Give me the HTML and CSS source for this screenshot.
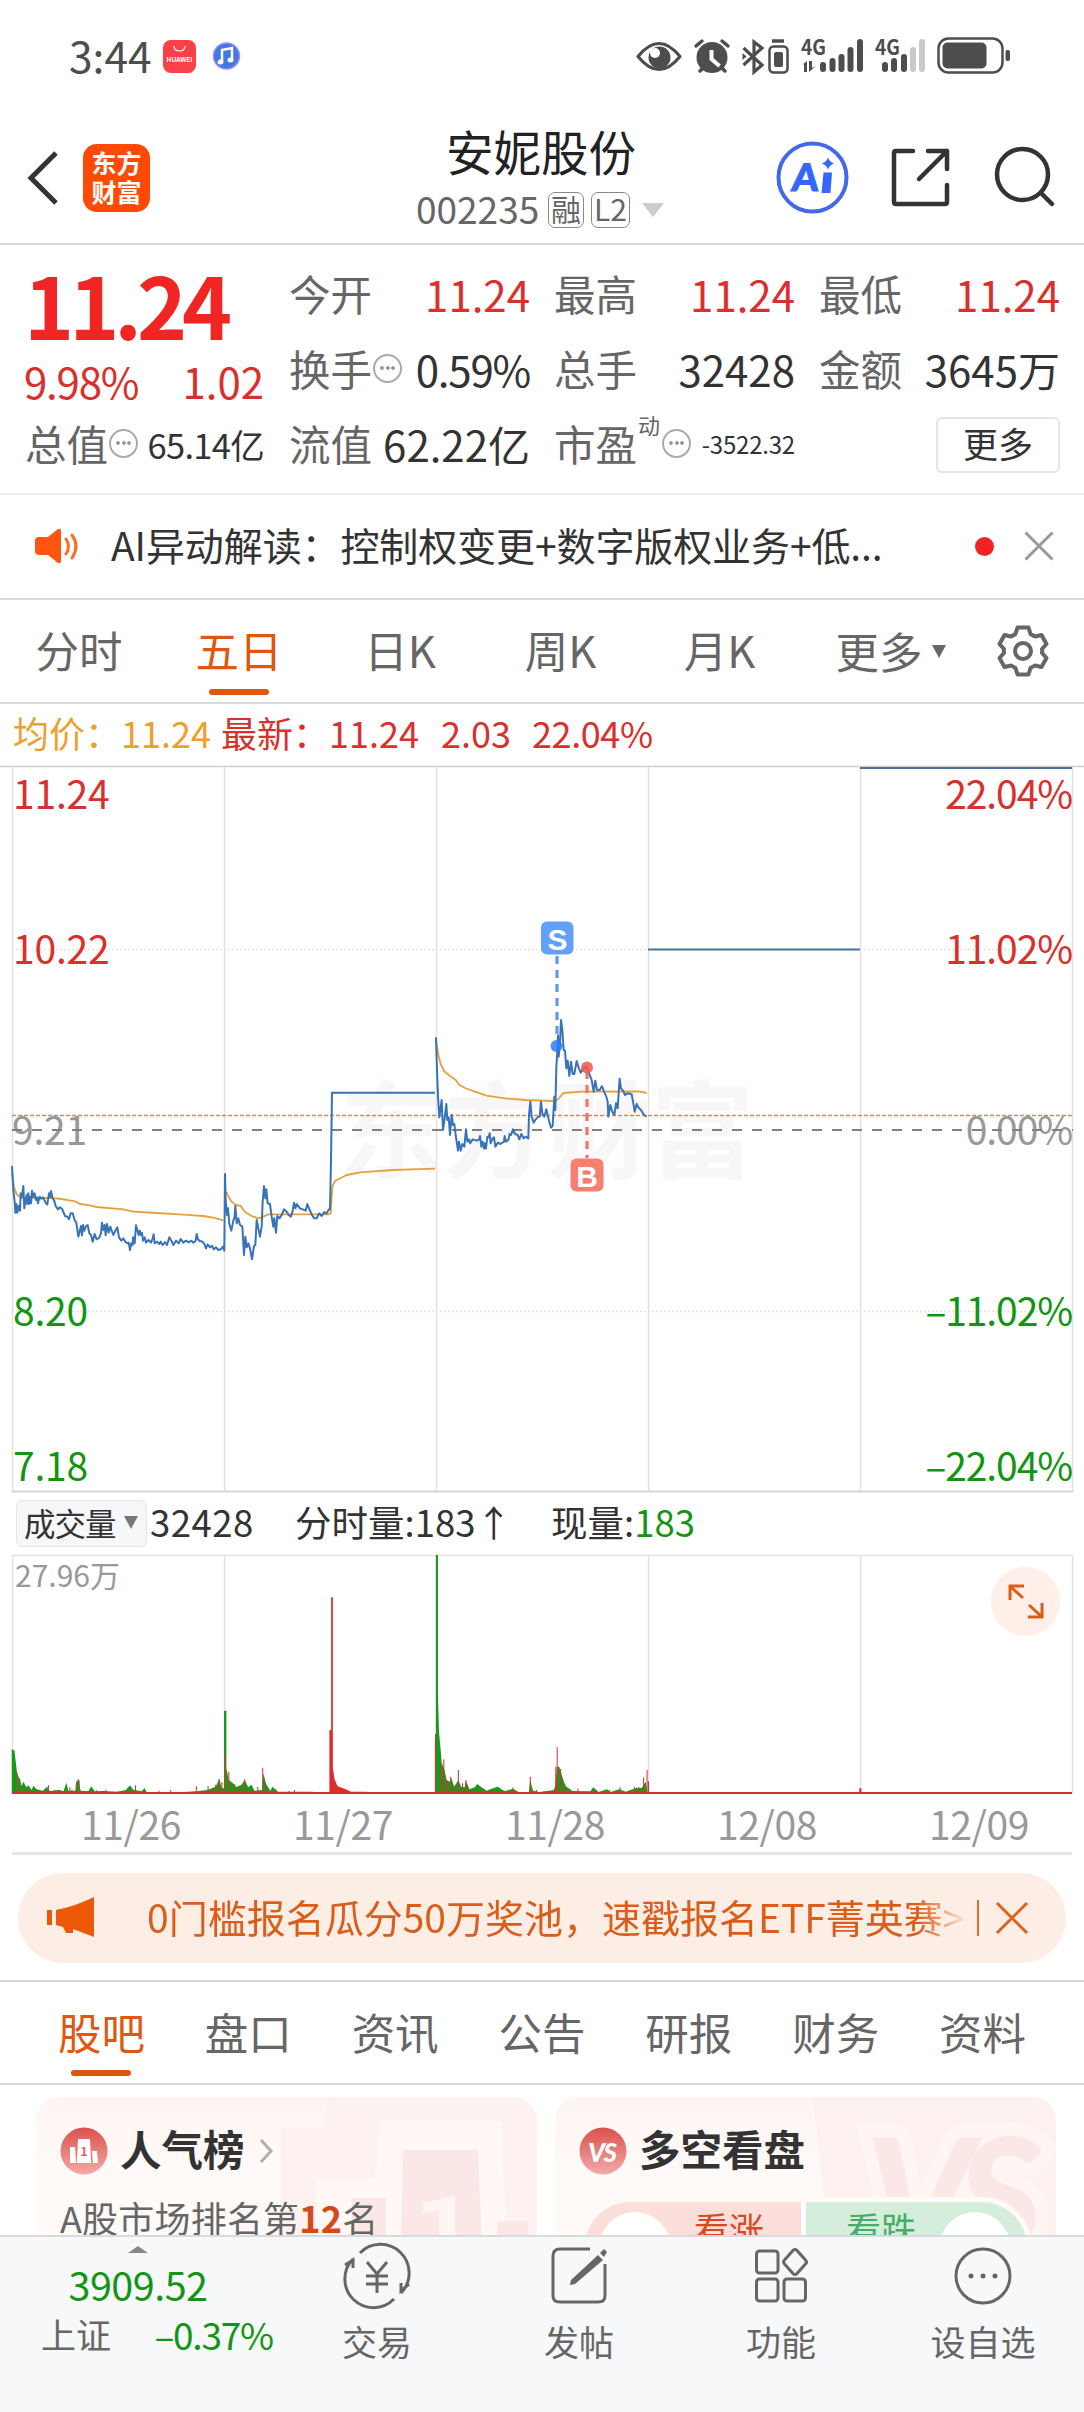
FILE: index.html
```html
<!DOCTYPE html>
<html lang="zh-CN">
<head>
<meta charset="utf-8">
<title>安妮股份 002235</title>
<link rel="stylesheet" href="styles.css">
</head>
<body>
<div class="screen">
<header class="status">
  <span class="clock">3:44</span>
  <svg class="status-apps" width="90" height="36" viewBox="162 38 90 36">
    <rect x="163" y="40" width="33" height="33" rx="8" fill="#fb4048"/>
    <path d="M174 46q0 5 5.500 5t5.500-5" fill="none" stroke="#fff" stroke-width="1.200"/>
    <text x="179.500" y="61.500" font-size="6.500" font-weight="700" fill="#fff" text-anchor="middle">HUAWEI</text>
    <circle cx="226.500" cy="56" r="13" fill="#4377e5" stroke="#9f8df0" stroke-width="1.500"/>
    <path d="M222 62V50l10-2v12" fill="none" stroke="#fff" stroke-width="2.500"/>
    <ellipse cx="220.500" cy="62" rx="3" ry="2.500" fill="#fff"/><ellipse cx="230.500" cy="60" rx="3" ry="2.500" fill="#fff"/>
  </svg>
  <svg class="status-icons" width="376" height="40" viewBox="634 36 376 40">
    <g fill="none" stroke="#4d4d4d" stroke-width="3.200">
      <path d="M638 56.500q21-26 42 0q-21 26-42 0z" stroke-linejoin="round"/>
      <path d="M696 46l6-5M728 46l-6-5M700 71l4-4M725 71l-4-4" stroke-linecap="round" stroke-width="3.500"/>
      <path d="M743.500 48L762 65l-8 7V42l8 6-18.500 17" stroke-width="3.200"/>
      <rect x="769.500" y="46.500" width="18" height="26" rx="4" stroke-width="2.500"/>
      <path d="M772 41h12" stroke-width="3.500"/>
      <rect x="938.500" y="38.500" width="64" height="34" rx="10" stroke-width="2.500"/>
    </g>
    <g fill="#4d4d4d">
      <circle cx="659.500" cy="57.500" r="11"/><circle cx="712" cy="57.500" r="15.500"/>
      <rect x="774" y="52" width="9" height="15" rx="2"/>
      <path d="M742.500 53l4 3.500-4 3.500z"/>
      <rect x="942.500" y="42.500" width="44" height="26" rx="5"/>
      <rect x="1005.500" y="50" width="4.500" height="11" rx="2"/>
      <rect x="820" y="62" width="6" height="10" rx="3"/><rect x="829.500" y="58" width="6" height="14" rx="3"/><rect x="838.500" y="54" width="6" height="18" rx="3"/><rect x="847.500" y="47" width="6" height="25" rx="3"/><rect x="857" y="39" width="6" height="33" rx="3"/>
      <rect x="882" y="62" width="6" height="10" rx="3"/><rect x="891" y="58" width="6" height="14" rx="3"/><rect x="901" y="54" width="6" height="18" rx="3"/>
      <path d="M802 65l5-4v11h-3v-8zM809 61h3v7l4-2-7 6z"/>
      <text x="801" y="54.500" font-size="21" font-weight="700" textLength="25" lengthAdjust="spacingAndGlyphs">4G</text>
      <text x="875" y="54.500" font-size="21" font-weight="700" textLength="25" lengthAdjust="spacingAndGlyphs">4G</text>
    </g>
    <g fill="#c9c9c9"><rect x="910" y="47" width="6" height="25" rx="3"/><rect x="919" y="39" width="6" height="33" rx="3"/></g>
    <circle cx="655" cy="53" r="5" fill="#fff"/>
    <path d="M711.500 50v9l8 7" fill="none" stroke="#fff" stroke-width="4"/>
  </svg>
</header>

<section class="titlebar">
  <svg class="back" width="34" height="56" viewBox="26 149 34 56"><path d="M56 152L31 177l25 25" fill="none" stroke="#333" stroke-width="5"/></svg>
  <div class="brand"><span>东方</span><span>财富</span></div>
  <div class="stock">
    <h1>安妮股份</h1>
    <div class="code"><span>002235</span><b>融</b><b>L2</b><i></i></div>
  </div>
  <svg class="actions" width="284" height="76" viewBox="774 140 284 76">
    <circle cx="812.500" cy="177.500" r="34" fill="none" stroke="#4169e8" stroke-width="4"/>
    <path d="M823.500 172.500h8.500l-1.500 20.500h-9z" fill="#3567ff"/>
    <path d="M828 157.500q1.500 4.500 6 6q-4.500 1.500-6 6q-1.500-4.500-6-6q4.500-1.500 6-6z" fill="#3567ff"/>
    <text transform="translate(791,190.500) skewX(-5)" x="0" y="0" class="ai-letter">A</text>
    <g fill="none" stroke="#333" stroke-width="4.500" stroke-linecap="round" stroke-linejoin="round">
      <path d="M913 151h-17q-2 0-2 2v49q0 2 2 2h49q2 0 2-2v-17M928 151h19v18M947 151l-28 28"/>
      <circle cx="1022.500" cy="174.500" r="25.500"/><path d="M1041 193l11 11"/>
    </g>
  </svg>
</section>

<section class="quote">
  <div class="qcol price">
    <strong>11.24</strong>
    <div class="chg red"><span class="pct">9.98%</span><span>1.02</span></div>
    <div class="cell"><label>总值</label><em class="more"></em><span class="mid">65.14亿</span></div>
  </div>
  <div class="qcol">
    <div class="cell"><label>今开</label><span class="red">11.24</span></div>
    <div class="cell"><label>换手</label><em class="more"></em><span class="pct">0.59%</span></div>
    <div class="cell"><label>流值</label><span>62.22亿</span></div>
  </div>
  <div class="qcol">
    <div class="cell"><label>最高</label><span class="red">11.24</span></div>
    <div class="cell"><label>总手</label><span>32428</span></div>
    <div class="cell"><label>市盈</label><sup>动</sup><em class="more"></em><span class="small">-3522.32</span></div>
  </div>
  <div class="qcol">
    <div class="cell"><label>最低</label><span class="red">11.24</span></div>
    <div class="cell"><label>金额</label><span>3645万</span></div>
    <div class="cell"><button>更多</button></div>
  </div>
</section>

<section class="notice">
  <svg width="46" height="38" viewBox="33 527 46 38">
    <path d="M38 537h9l10-8q3-1 3 2v30q0 3-3 2l-10-8h-9q-4 0-4-4v-10q0-4 4-4z" fill="#ff5510"/>
    <path d="M65 539q5 7 0 15M71 535q8 11 0 23" fill="none" stroke="#ff6a2b" stroke-width="3" stroke-linecap="round"/>
  </svg>
  <p>AI异动解读：控制权变更+数字版权业务+低...</p>
  <i class="dot"></i>
  <svg width="30" height="30" viewBox="0 0 30 30"><path d="M1.500 1.500l27 27M28.500 1.500l-27 27" stroke="#999" stroke-width="3"/></svg>
</section>

<nav class="periods">
  <a>分时</a><a class="on">五日</a><a>日K</a><a>周K</a><a>月K</a><a class="drop">更多<i></i></a>
  <svg width="56" height="56" viewBox="-28 -28 56 56" fill="none" stroke="#666" stroke-width="4" stroke-linejoin="round">
    <path d="M-5.500-23.500H5.500L7.500-17Q11-15 12-14.500L18.500-16 23.500-7 19-2Q19.500 0 19 2L23.500 7 18.500 16 12 14.500Q11 15 7.500 17L5.500 23.500H-5.500L-7.500 17Q-11 15-12 14.500L-18.500 16-23.500 7-19 2Q-19.500 0-19-2L-23.500-7-18.500-16-12-14.500Q-11-15-7.500-17z"/><circle r="8"/>
  </svg>
</nav>

<div class="readout"><span class="avg">均价：11.24</span><span>最新：</span><span class="n1">11.24</span><span class="n2">2.03</span><span class="n3">22.04%</span></div>

<svg class="chart" width="1084" height="727" viewBox="0 766 1084 727">
  <text class="watermark" x="340" y="1170" textLength="414" lengthAdjust="spacingAndGlyphs">东方财富</text>
  <g class="grid"><path d="M0 766.500H1084" stroke="#d0d0d0"/><path d="M12.500 767V1492M224.500 767V1492M436.500 767V1492M648.500 767V1492M860.500 767V1492M1072.500 767V1492"/><path d="M12 949.500H1072M12 1311.500H1072" stroke-dasharray="2 2"/><path class="base" d="M12 1491.500H1073"/></g>
  <path d="M12 1115.500H1073" stroke="#e3835a" stroke-width="1.500" stroke-dasharray="4 2"/>
  <g class="axis">
    <g fill="#d9302e"><text x="13" y="809">11.24</text><text x="13" y="964">10.22</text><text x="1072" y="809" class="end">22.04%</text><text x="1072" y="964" class="end">11.02%</text></g>
    <g fill="#999"><text x="12" y="1145">9.21</text><text x="1072" y="1145" class="end">0.00%</text></g>
    <g fill="#129612"><text x="13" y="1326">8.20</text><text x="13" y="1481">7.18</text><text x="1072" y="1326" class="end">–11.02%</text><text x="1072" y="1481" class="end">–22.04%</text></g>
  </g>
  <path d="M12 1130H1073" stroke="#808080" stroke-width="2" stroke-dasharray="10 10"/>
  <g class="line" transform="translate(0,1000) scale(.33333)">
    <path class="mean" d="M36 520L42 562 50 583 64 594 155 594 185 597 225 604 240 612 270 616 290 621 370 628 400 635 470 639 540 643 610 648 640 653 670 661M678 575L684 587 695 605 705 614 722 618 735 636 755 648 775 655 790 650 805 643 985 643 992 640 997 560 1005 543 1040 525 1080 517 1180 510 1305 506"/>
    <path class="last" d="M36 498L40 570 44 605 46 638 49 612 52 638 56 618 60 632 62 580 66 590 70 558 73 625 77 598 80 585 82 612 85 580 87 612 90 590 93 610 96 572 100 590 104 580 108 600 111 592 114 610 119 590 124 596 129 592 133 600 138 610 142 614 147 580 150 592 153 573 158 595 163 603 167 618 174 628 180 622 187 628 195 648 202 650 207 658 212 640 218 640 224 660 229 668 235 710 240 690 243 678 246 706 249 675 253 692 258 678 263 675 268 700 273 705 278 725 284 702 290 718 297 714 303 700 306 668 310 690 314 675 317 706 321 672 326 698 331 680 335 692 340 705 346 692 352 682 357 712 364 722 370 715 376 725 382 730 386 728 390 750 394 730 398 735 399 712 404 730 408 676 412 690 416 705 419 692 423 705 426 698 429 722 434 712 438 728 445 720 453 728 458 715 461 703 464 730 471 725 478 732 482 725 488 735 495 726 501 735 508 712 514 722 520 735 528 722 536 730 542 717 550 728 558 722 566 727 574 722 580 728 587 722 590 702 594 718 600 724 606 724 613 732 618 745 623 733 630 742 636 737 641 748 648 742 655 750 662 748 669 740 673 752 675 522 677 600 681 645 684 625 688 672 694 692 700 662 704 650 706 618 710 670 715 655 720 675 727 680 732 765 736 710 740 742 745 730 750 745 756 778 762 738 766 735 770 660 774 680 780 710 785 680 788 605 792 558 796 595 799 568 803 610 810 612 815 650 820 680 823 655 828 698 832 648 838 655 845 645 852 628 860 635 866 645 873 650 878 632 882 608 886 625 890 612 900 625 908 628 917 632 922 612 929 630 936 645 942 655 950 655 957 640 965 648 973 636 980 640 987 628 990 628 993 480 996 278 1305 278"/>
  </g>
  <g class="line" transform="translate(425,1000) scale(.33333)">
    <path class="mean" d="M33 120L40 165 47 192 57 213 75 228 92 240 103 255 120 264 150 275 185 287 240 295 300 300 390 303 400 297 415 279 470 275 640 274 665 279"/>
    <path class="last" d="M33 112L36 210 39 290 43 352 50 300 54 390 59 355 64 312 67 360 71 352 75 405 80 345 84 375 88 372 92 405 99 452 102 425 107 452 112 432 118 440 123 388 127 425 132 418 135 430 143 418 155 422 163 418 165 408 169 440 173 425 177 446 180 430 183 446 187 410 191 412 194 400 197 430 203 415 207 412 211 440 218 428 226 432 237 425 239 408 243 425 250 420 254 402 258 405 264 388 270 402 278 405 283 418 289 402 296 415 302 410 310 415 312 345 316 305 320 350 326 368 332 358 340 350 344 350 348 305 352 340 358 350 364 328 372 362 378 383 383 378 386 325 388 290 391 330 394 200 397 155 399 106 401 170 405 130 408 60 412 90 416 150 420 152 424 205 428 182 433 228 438 185 443 222 448 222 455 183 460 200 467 218 476 205 484 200 493 222 500 240 506 275 511 242 516 270 524 270 531 258 537 275 544 290 548 305 550 350 556 315 562 335 568 345 573 310 578 325 584 236 588 265 594 272 600 285 608 280 620 283 625 310 629 335 635 312 640 322 648 330 655 342 665 350"/>
  </g>
  <path d="M648 949.500H860M860 768H1072" stroke="#4a7399" stroke-width="2"/>
  <path d="M557 956V1040" stroke="#6099ec" stroke-width="3.200" stroke-dasharray="8 6"/>
  <circle cx="556.500" cy="1046" r="6" fill="#2f7df6" opacity=".85"/>
  <path d="M587 1071V1158" stroke="#f47567" stroke-width="3.200" stroke-dasharray="8 6"/>
  <circle cx="587" cy="1067.500" r="6" fill="#f65549" opacity=".85"/>
  <g class="flag"><rect x="541" y="921.500" width="32.500" height="33" rx="6" fill="#62a1fa"/><text x="557.500" y="949.500">S</text><rect x="570.500" y="1158.500" width="33" height="33" rx="6" fill="#f77f70"/><text x="587" y="1186.500">B</text></g>
</svg>

<div class="vol-legend"><span class="select">成交量<i></i></span><span class="v1">32428</span><span class="v2">分时量:183↑</span><span class="v3">现量:<b>183</b></span></div>

<div class="volume">
<svg width="1084" height="242" viewBox="0 1554 1084 242">
  <path class="vgrid" d="M12 1555.500H1072M12.500 1555V1794M224.500 1555V1794M436.500 1555V1794M648.500 1555V1794M860.500 1555V1794M1072.500 1555V1794"/>
  <text x="15" y="1587" class="vmax">27.96万</text>
  <g transform="translate(0,1480) scale(.69132,.33333)">
    <path fill="#1b981b" d="M17 941V807L21 812 23 850 25 885 29 897 31 918 34 905 38 922 41 916 46 930 48 917 53 928 62 932 68 920 72 933 85 930 92 933 96 908 99 932 109 932 110 905 115 900 116 933 128 933 132 919 137 934 150 933 170 935 182 930 188 916 193 929 205 934 209 924 212 936 265 936 284 934 300 930 312 920 317 897 321 925H324V692H327.500V865L331 900 337 910 342 921 349 915 354 900 359 922 364 914 368 932 379 930 381 880 385 912 391 932 394 920 402 935 450 935 470 938H629V785H630.500V225H633.500V645L635 755 637 800 639 850 643 870 646 900 650 905 653 895 657 920 663 900 667 920 672 922 674 902 679 928 687 922 690 912 696 921 704 932 711 926 720 920 730 934 742 926 750 936 765 936 767 900 771 932 780 936 802 930 806 860H809L814 895 818 918 828 933 854 934 858 922 866 936 878 928 883 936 896 928 905 935 920 924 928 924 934 905 937 941z"/>
    <path stroke="#d73431" stroke-width="1.500" fill="none" d="M25 941V878M32 941V925M39 941V930M44 941V927M50 941V936M57 941V930M66 941V930M70 941V916M79 941V930M86 941V930M101 941V922M104 941V929M113 941V897M117 941V929M129 941V933M140 941V931M153 941V929M171 941V934M183 941V930M187 941V926M196 941V916M230 941V932M247 941V930M259 941V935M284 941V919M292 941V932M301 941V918M307 941V926M312 941V914M317 941V897M321 941V906M325 941V822M331 941V875M339 941V912M347 941V920M354 941V898M366 941V928M373 941V920M380 941V863M387 941V920M399 941V928M418 941V933M426 941V930M630 941V762M639 941V852M642 941V838M647 941V902M652 941V890M657 941V918M663 941V870M669 941V910M674 941V900M681 941V926M692 941V930M700 941V927M714 941V929M730 941V932M742 941V922M767 941V890M776 941V930M790 941V934M802 941V925M804 941V860M806 941V802M811 941V867M817 941V912M824 941V927M836 941V926M860 941V932M882 941V930M897 941V922M912 941V930M918 941V920M924 941V921M931 941V892M936 941V870M938 941V904"/>
    <path fill="#e12b2b" d="M476.500 941V750H479V352H481.500V865L484 898 488 918 500 928 508 935 530 935 540 939V941zM1243 941V925H1246V941z"/>
  </g>
  <path d="M12 1793H1072" stroke="#cc3232" stroke-width="2"/>
  <circle cx="1025.500" cy="1601.500" r="34.500" fill="#fef0e8"/>
  <path d="M1010 1600v-14h14M1011 1587l12 11M1042 1603v14h-14M1041 1616l-12-11" fill="none" stroke="#dc5c19" stroke-width="3"/>
</svg>
<div class="dates"><span>11/26</span><span>11/27</span><span>11/28</span><span>12/08</span><span>12/09</span></div>
</div>

<section class="promo">
  <svg width="48" height="42" viewBox="47 1897 48 42"><path d="M47 1910h5v15h-5zM56 1910q20-4 38-13v40l-21-8v4h-7l-3-6-7-2z" fill="#ec5807"/></svg>
  <p>0门槛报名瓜分50万奖池，速戳报名ETF菁英赛&gt;</p>
  <i></i>
  <svg width="34" height="34" viewBox="0 0 34 34"><path d="M2 2l30 30M32 2L2 32" stroke="#df611c" stroke-width="3"/></svg>
</section>

<nav class="sections"><a class="on">股吧</a><a>盘口</a><a>资讯</a><a>公告</a><a>研报</a><a>财务</a><a>资料</a></nav>

<section class="cards">
  <article class="card">
    <svg class="card-art" width="267" height="150" viewBox="270 2097 267 150">
      <path d="M281 2128h43l3-31h210v150H281z" fill="#fdf2f0"/><path d="M314 2247l2-68h59l5-58h121l6 126z" fill="#fff8f6"/>
      <path d="M401 2247l2-97h75l4 97zM352 2247v-49h34v49zM497 2247v-26h31v26z" fill="#fbe8e6"/>
      <path d="M423 2203l32-8v52h-16v-37l-16 4z" fill="#fff5f2"/>
    </svg>
    <div class="card-title">
      <svg width="48" height="48" viewBox="0 0 48 48"><defs><linearGradient id="coral" x2="0" y2="1"><stop stop-color="#db514d"/><stop offset="1" stop-color="#f4aaa7"/></linearGradient></defs><circle cx="24" cy="24" r="23.500" fill="url(#coral)"/><path d="M10 20h5l1 16h-6zM18 12h12l1 24H17zM32 24h5l1 12h-5z" fill="#fff"/><text x="24" y="29" font-size="12" font-weight="700" fill="#db605b" text-anchor="middle">1</text></svg>
      <h2>人气榜</h2>
      <svg width="14" height="26" viewBox="0 0 14 26"><path d="M2 2l10 11L2 24" fill="none" stroke="#b3afae" stroke-width="3"/></svg>
    </div>
    <p>A股市场排名第<b>12</b>名</p>
  </article>
  <article class="card">
    <svg class="card-art" width="243" height="150" viewBox="0 0 243 150">
      <path d="M0 0H243V150H16z" fill="#fdf1ef"/>
      <text x="52" y="161" class="vs-art">VS</text>
    </svg>
    <div class="card-title">
      <svg width="48" height="48" viewBox="0 0 48 48"><circle cx="24" cy="24" r="23.500" fill="url(#coral)"/><text x="23" y="35" class="vs">VS</text></svg>
      <h2>多空看盘</h2>
    </div>
    <div class="vote"><div class="up"><i></i><span>看涨</span></div><div class="down"><span>看跌</span><i></i></div></div>
  </article>
</section>

<footer class="toolbar">
  <div class="index"><i></i><strong>3909.52</strong><div><span>上证</span><b>–0.37%</b></div></div>
  <div class="tool"><svg viewBox="-34 -30 68 60"><path d="M-17-23A28.500 28.500 0 0 1 24 17M17 23A28.500 28.500 0 0 1-24-17M-32-11l8-5v8M32 8l-8 7v-8M-10-14L0-2l10-12M0-2V17M-11 0H11M-11 8H11"/></svg><span>交易</span></div>
  <div class="tool"><svg viewBox="-34 -30 68 60"><path d="M11-27H-19q-7 0-7 7V20q0 6 7 6H19q7 0 7-6V-12"/><path class="solid" d="M19-21l5 5L-4 8l-5 1 1-5zM21-23l4-4 3 3-3 5z"/></svg><span>发帖</span></div>
  <div class="tool"><svg viewBox="-34 -30 68 60"><rect x="-24.500" y="-25" width="21.500" height="22" rx="3"/><rect x="-24.500" y="3" width="21.500" height="22" rx="3"/><rect x="3" y="3" width="21.500" height="22" rx="3"/><path d="M12.500-26q1.500-1 3 0l9 10q2 2 0 4l-9 10q-1.500 1-3 0l-9-10q-2-2 0-4z"/></svg><span>功能</span></div>
  <div class="tool"><svg viewBox="-34 -30 68 60"><circle r="27"/><g class="solid"><circle cx="-12" r="2.500"/><circle r="2.500"/><circle cx="12" r="2.500"/></g></svg><span>设自选</span></div>
</footer>
</div>
</body>
</html>
```
FILE: styles.css
```css
* { box-sizing: border-box; }
body { margin: 0; background: #fff; color: #333; font-family: "Noto Sans CJK SC", sans-serif; }
.screen { width: 1084px; height: 2412px; overflow: hidden; display: flex; flex-direction: column; }
.screen > * { flex-shrink: 0; }
svg { display: block; overflow: visible; }
h1, h2, p { margin: 0; }
i, em { font-style: normal; }
.red { color: #d9302e; }

.status { height: 112px; display: flex; align-items: center; padding: 0 74px 0 69px; color: #4d4d4d; }
.clock { font-size: 42.500px; line-height: 42px; width: 93px; margin-top: -3px; }
.status-icons { margin-left: auto; }

.titlebar { height: 133px; padding: 0 26px; display: flex; align-items: center; border-bottom: 2px solid #d5d5d5; }
.brand { width: 67px; height: 68px; margin-left: 23px; border-radius: 14px; background: #ff4a05; color: #fff; font-size: 25px; line-height: 29px; font-weight: 700; display: flex; flex-direction: column; align-items: center; justify-content: center; padding-bottom: 2px; }
.stock { width: 250px; margin-left: 268px; margin-right: auto; display: flex; flex-direction: column; align-items: flex-start; }
h1 { font-size: 47.500px; line-height: 58px; font-weight: 400; color: #222; margin-left: 28px; }
.code { height: 54px; padding-top: 6px; display: flex; align-items: center; font-size: 37px; color: #666; }
.code span { width: 132px; line-height: 40px; margin: -4px 0 0 -2px; white-space: nowrap; }
.code b { height: 36px; border: 1.500px solid #888; border-radius: 7px; font-weight: 400; font-size: 30px; line-height: 30px; padding: 0 2px; margin-right: 7px; }
.code i { margin-left: 5px; border: 11px solid transparent; border-top: 14px solid #ccc; border-bottom: 0; }
.ai-letter { font: 900 38px Lato, sans-serif; fill: #3567ff; stroke: #3567ff; stroke-width: 1px; }

.quote { height: 250px; padding: 13px 24px 0 25px; display: flex; border-bottom: 2px solid #ededed; font-size: 42px; line-height: 64px; }
.qcol { width: 241px; margin-right: 24px; }
.qcol:last-child { margin-right: 0; }
.cell { height: 75px; display: flex; align-items: center; padding-bottom: 1px; white-space: nowrap; }
.cell label { color: #666; margin-bottom: 4px; font-size: 41.500px; }
.cell span { margin: 0 0 3px auto; }
.pct { letter-spacing: -1.200px; }
.cell .mid { font-size: 34.500px; letter-spacing: -.7px; }
.cell .small { font-size: 24px; letter-spacing: -.2px; }
.cell sup { font-size: 22px; line-height: 24px; margin: -42px 1px 0 1px; color: #666; }
.more { width: 29px; height: 29px; flex: none; border: 2px solid #aaa; border-radius: 50%; margin: -4px 0 0 1px; background: radial-gradient(circle, #999 1.500px, transparent 2.200px) center/6px 6px no-repeat, radial-gradient(circle, #999 1.500px, transparent 2.200px) 4px center/6px 6px no-repeat, radial-gradient(circle, #999 1.500px, transparent 2.200px) 15px center/6px 6px no-repeat; }
.price { width: 239px; margin-right: 25px; }
.price strong { display: block; height: 88px; font-size: 85px; line-height: 86px; letter-spacing: -5px; font-kerning: none; color: #f12624; margin: 2px 0 0 -1px; }
.chg { height: 60px; line-height: 66px; display: flex; justify-content: space-between; }
.chg .pct { margin-left: -1px; }
button { margin-left: auto; width: 124px; height: 56px; border: 2px solid #e5e5e5; border-radius: 6px; background: #fff; padding: 0 0 4px; font: 35px/48px "Noto Sans CJK SC", sans-serif; color: #333; }

.notice { height: 105px; padding: 0 30px 2px 34px; display: flex; align-items: center; border-bottom: 2px solid #d8d8d8; }
.notice p { width: 832px; margin: -4px 0 0 31px; font-size: 39px; line-height: 50px; letter-spacing: -.1px; white-space: nowrap; }
.dot { width: 19px; height: 19px; border-radius: 50%; background: #f32323; margin: 2px 30px 0 34px; flex: none; }

.periods { height: 104px; border-bottom: 2px solid #d8d8d8; display: grid; grid-template-columns: 160px 157px 168px 153px 165px 177px 85px; justify-items: center; font-size: 43.500px; line-height: 100px; color: #666; }
.periods a { margin-left: -2px; }
.periods svg { margin-top: 23px; }
.periods a, .sections a { display: flex; flex-direction: column; align-items: center; white-space: nowrap; }
.on { color: #df5810; }
.on::after { content: ""; width: 60px; height: 6px; border-radius: 3px; background: #dd570f; margin-top: -11px; }
.periods .on { margin-left: 1px; }
.periods .drop { flex-direction: row; gap: 9px; }
.drop i { border: 7.500px solid transparent; border-top: 13px solid #666; border-bottom: 0; }

.readout { height: 62px; padding-left: 13px; font-size: 36px; line-height: 56px; color: #d9302e; display: flex; white-space: nowrap; }
.avg { color: #eda02b; width: 208px; }
.n1 { width: 112px; }
.n2 { width: 91px; }
.n3 { letter-spacing: -.4px; }

.grid path { fill: none; stroke: #e2e2e2; stroke-width: 1.500; }
.grid path:first-child { stroke: #d0d0d0; }
.grid .base { stroke: #d5d5d5; stroke-width: 2; }
.axis { font-size: 39px; }
.axis text { letter-spacing: -.2px; }
.axis .end { text-anchor: end; letter-spacing: -1.100px; }
.line path { fill: none; stroke-linejoin: round; }
.mean { stroke: #e7a13c; stroke-width: 5.500; }
.last { stroke: #3873b8; stroke-width: 6; }
.watermark { font-size: 106px; font-weight: 700; fill: #f7f7f8; }
.flag text { font: 700 30px "Liberation Sans", sans-serif; fill: #fff; text-anchor: middle; }

.vol-legend { height: 61px; display: flex; padding: 7px 0 0 16px; font-size: 36.500px; line-height: 44px; white-space: nowrap; }
.select { width: 131px; height: 47px; border: 1px solid #e5e6ea; border-radius: 6px; background: #f6f7f9; font-size: 31.500px; letter-spacing: -1px; padding-left: 7px; display: flex; align-items: center; gap: 8px; padding-bottom: 3px; }
.select i { border: 7.500px solid transparent; border-top: 13px solid #777; border-bottom: 0; }
.v1 { width: 145px; margin-left: 3px; letter-spacing: .5px; }
.v2 { width: 256px; }
.v3 b { font-weight: 400; color: #159515; }

.volume { height: 301px; }
.volume > svg { height: 242px; }
.vgrid { stroke: #e2e2e2; stroke-width: 1.500; fill: none; }
.vmax { font-size: 30px; fill: #999; }
.dates { width: 1060px; height: 59px; margin: 0 12px; padding-left: 13px; border-bottom: 3px solid #e5e5e5; display: grid; grid-template-columns: repeat(5, 212px); text-align: center; font-size: 39px; line-height: 54px; color: #999; letter-spacing: -.4px; }

.promo { height: 90px; margin: 18px 18px 17px; border-radius: 45px; background: #fceee5; color: #dc5c19; display: flex; align-items: center; padding-left: 29px; }
.promo p { width: 817px; margin: -5px 0 0 52px; overflow: hidden; font-size: 39px; line-height: 58px; white-space: nowrap; -webkit-mask-image: linear-gradient(90deg, #000 770px, transparent 822px); mask-image: linear-gradient(90deg, #000 770px, transparent 822px); }
.promo i { width: 2px; height: 36px; background: #df6b2c; margin: 0 16px 0 13px; }

.sections { height: 105px; padding: 0 28px; border-top: 2px solid #d8d8d8; border-bottom: 2px solid #d8d8d8; display: grid; grid-template-columns: repeat(7, 1fr); font-size: 43.500px; line-height: 99px; color: #666; }

.cards { height: 150px; padding: 12px 28px 0 36px; display: flex; gap: 18px; overflow: hidden; }
.card { width: 501px; height: 220px; border-radius: 24px; background: linear-gradient(#fef5f3, #fffaf7 70px); padding: 30px 24px; overflow: hidden; display: grid; grid-template-columns: 1fr; align-content: start; }
.card-art { grid-area: 1 / 1; margin: -30px -24px 0 auto; height: 150px; }
.card-title { grid-area: 1 / 1; height: 48px; display: flex; align-items: center; }
h2 { font-size: 41.500px; line-height: 48px; margin: -7px 14px 0 12px; }
.card p { margin-top: -55px; font-size: 36px; line-height: 50px; letter-spacing: .2px; color: #666; white-space: nowrap; }
.card p b { color: #d9481b; }
.vs { font: italic 900 26px Lato, sans-serif; fill: #fff; text-anchor: middle; letter-spacing: -1px; }
.vs-art { font: italic 900 165px Lato, sans-serif; fill: #fbe8e6; stroke: #fff6f4; stroke-width: 26px; paint-order: stroke; letter-spacing: -14px; }
.vote { height: 100px; margin: -50px 0 0 1px; border: 5px solid #fff9f7; border-radius: 50px; overflow: hidden; display: flex; gap: 5px; background: #fff; font-size: 35px; line-height: 52px; }
.vote > div { flex: 1; display: flex; justify-content: space-between; }
.vote i { width: 72px; height: 74px; border-radius: 50%; background: #fff; margin-top: 10px; }
.up { background: #fcdedb; color: #da4a20; padding: 0 37px 0 14px; }
.down { background: #d5eedb; color: #45ad69; padding: 0 16px 0 40px; }

.toolbar { height: 177px; background: #f7f8fa; border-top: 2px solid #d8dadc; display: grid; grid-template-columns: 276px repeat(4, 202px); color: #666; }
.index { color: #159515; display: flex; flex-direction: column; align-items: center; }
.index i { margin-top: 9px; border: 10.500px solid transparent; border-bottom: 7px solid #888; border-top: 0; }
.index strong { font-size: 39.500px; line-height: 54px; font-weight: 400; letter-spacing: -.5px; margin: 4px 0 0; }
.index div { width: 232px; margin-left: 38px; display: flex; justify-content: space-between; font-size: 35px; line-height: 46px; white-space: nowrap; }
.index span { color: #666; }
.index b { font-size: 37px; font-weight: 400; letter-spacing: -1.200px; }
.tool { display: flex; flex-direction: column; align-items: center; padding-top: 9px; font-size: 35px; line-height: 50px; }
.tool svg { width: 68px; height: 60px; fill: none; stroke: #666; stroke-width: 3; margin-bottom: 10px; }
.tool .solid { fill: #666; stroke: none; }
```
